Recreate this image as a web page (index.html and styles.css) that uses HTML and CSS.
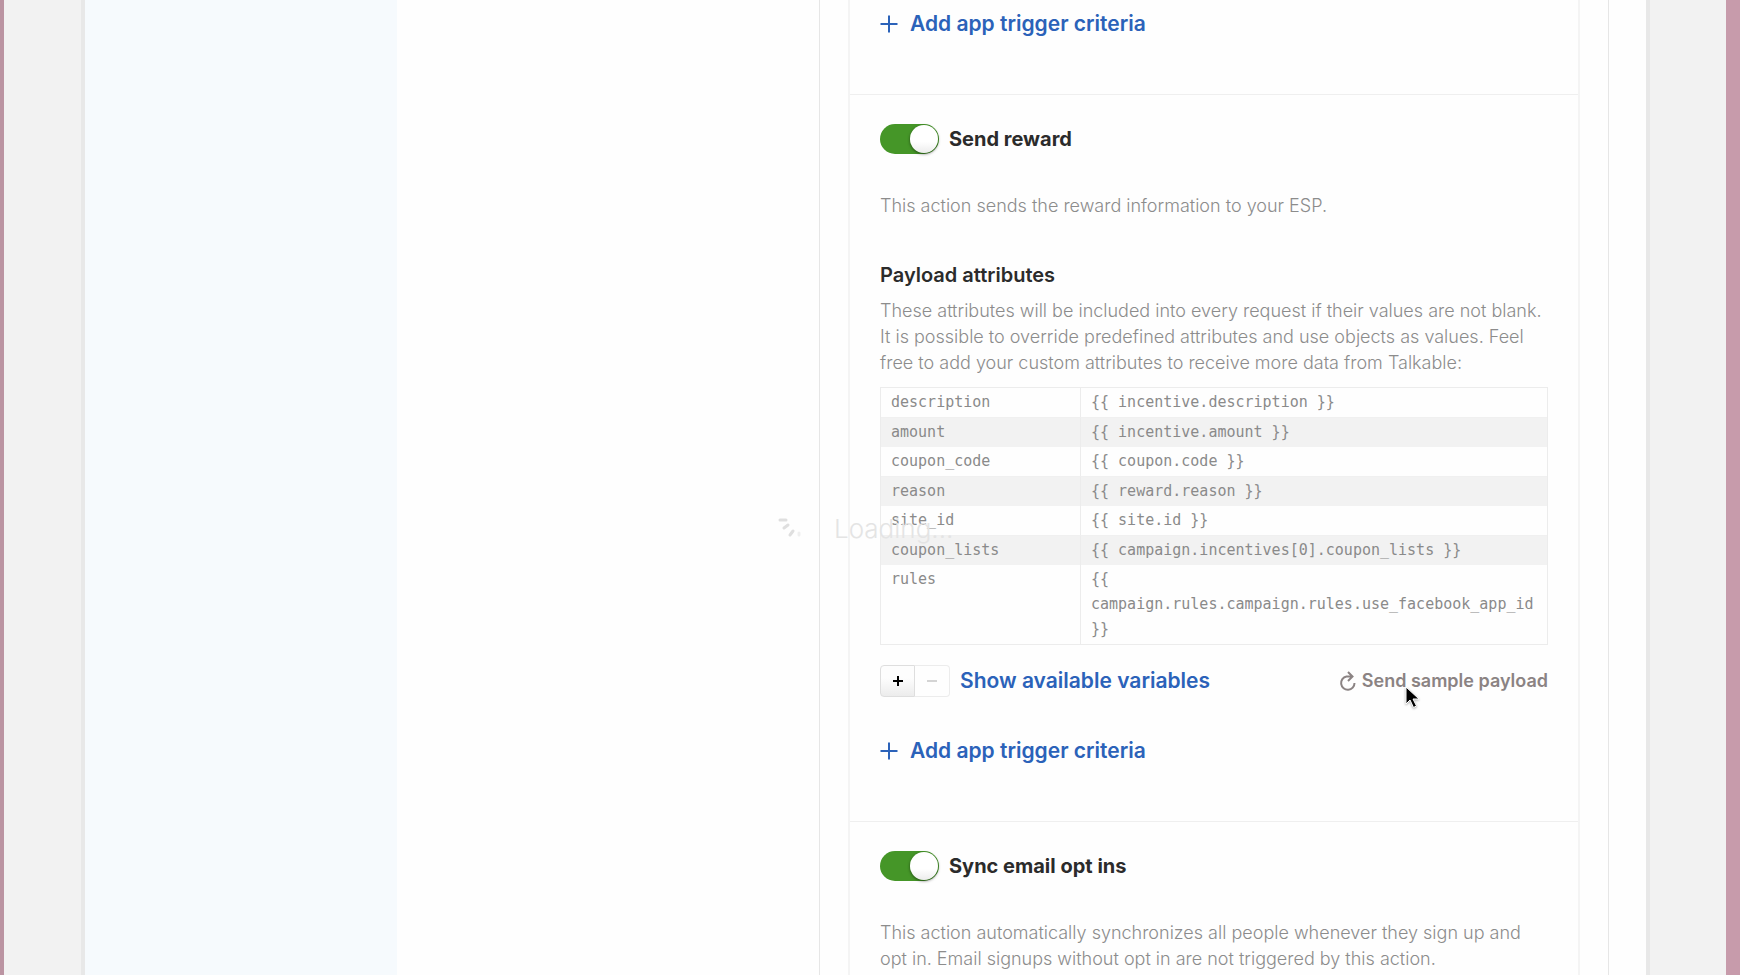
FILE: index.html
```
<!DOCTYPE html>
<html lang="en">
<head>
<meta charset="utf-8">
<title>Integration actions</title>
<link rel="stylesheet" href="styles.css">
</head>
<body>
<div class="window">
  <div class="sheet">
    <aside class="sidebar"></aside>
    <main class="main">
      <div class="panel">
        <div class="card">
          <section class="action action-first">
            <a class="add-link" href="#"><svg class="plus" viewBox="0 0 18 18" aria-hidden="true"><path d="M9 0.5v17M0.5 9h17"/></svg>Add app trigger criteria</a>
          </section>
          <section class="action">
            <label class="switch-row"><input class="switch" type="checkbox" checked>Send reward</label>
            <p class="intro">This action sends the reward information to your ESP.</p>
            <h3 class="heading">Payload attributes</h3>
            <p class="help">These attributes will be included into every request if their values are not blank. It is possible to override predefined attributes and use objects as values. Feel free to add your custom attributes to receive more data from Talkable:</p>
            <table class="payload">
              <tbody>
                <tr><td class="key">description</td><td>{{ incentive.description }}</td></tr>
                <tr><td class="key">amount</td><td>{{ incentive.amount }}</td></tr>
                <tr><td class="key">coupon_code</td><td>{{ coupon.code }}</td></tr>
                <tr><td class="key">reason</td><td>{{ reward.reason }}</td></tr>
                <tr><td class="key">site_id</td><td>{{ site.id }}</td></tr>
                <tr><td class="key">coupon_lists</td><td>{{ campaign.incentives[0].coupon_lists }}</td></tr>
                <tr><td class="key">rules</td><td>{{ campaign.rules.campaign.rules.use_facebook_app_id }}</td></tr>
              </tbody>
            </table>
            <div class="toolbar">
              <div class="stepper">
                <button class="step" type="button" aria-label="Add row"><svg viewBox="0 0 12 12" aria-hidden="true"><path d="M6 1v10M1 6h10"/></svg></button>
                <button class="step" type="button" aria-label="Remove row" disabled><svg viewBox="0 0 12 12" aria-hidden="true"><path d="M1 6h10"/></svg></button>
              </div>
              <a class="link" href="#">Show available variables</a>
              <button class="sample" type="button"><svg class="reload" viewBox="0 0 18 20" aria-hidden="true"><path d="M14 5.500H8.500a6.700 6.700 0 1 0 8 6.500M10 1l4.500 4.500L10 10"/></svg>Send sample payload
                <svg class="cursor" viewBox="0 0 16 24" aria-hidden="true"><path d="M1 1v17l4-4 3.500 7.500 3-1.500L8 13h6z"/></svg>
              </button>
            </div>
            <a class="add-link" href="#"><svg class="plus" viewBox="0 0 18 18" aria-hidden="true"><path d="M9 0.5v17M0.5 9h17"/></svg>Add app trigger criteria</a>
          </section>
          <section class="action">
            <label class="switch-row"><input class="switch" type="checkbox" checked>Sync email opt ins</label>
            <p class="intro">This action automatically synchronizes all people whenever they sign up and opt in. Email signups without opt in are not triggered by this action.</p>
          </section>
        </div>
      </div>
    </main>
  </div>
  <div class="loading" role="status">
    <svg class="spinner" viewBox="0 0 24 24" aria-hidden="true"><path d="M2 3h6M6 11l4-3M12 18l3-4"/><path class="faint" d="M21 16v2"/></svg>
    Loading...
  </div>
</div>
</body>
</html>
```
FILE: styles.css
```
* { box-sizing: border-box; }

body {
  margin: 0;
  font-family: Inter, "Open Sans", sans-serif;
  font-size: 18px;
  line-height: 26px;
  color: #2b2b2b;
}

.window {
  position: relative;
  height: 100vh;
  overflow: hidden;
  padding: 0 80px 0 81px;
  background: #f2f2f2;
  border-left: 4px solid #bb94a2;
  border-right: 14px solid #c79bab;
  display: flex;
}

.sheet {
  flex: 1;
  display: flex;
  background: #fefefe;
  box-shadow: 0 0 0 4px #e8e8e8;
}

.sidebar {
  flex: 0 0 20%;
  background: #f6fafd;
}

.main {
  flex: 1;
  display: flex;
  justify-content: flex-end;
  padding-right: 37px;
}

.panel {
  flex: 0 1 790px;
  min-width: 0;
  padding: 0 28px;
  border: 0 solid #e6e6e6;
  border-width: 0 1px;
}

.card {
  min-height: 100%;
  border: 0 solid #f4f4f4;
  border-width: 0 2px;
}

.action {
  padding: 29px 30px 57px;
  border-top: 1px solid #efefef;
}

.action-first {
  padding-top: 11px;
  border-top: 0;
}

.add-link, .link {
  color: #2b62b9;
  font-size: 21px;
  font-weight: 600;
  text-decoration: none;
}

.add-link {
  display: flex;
  align-items: center;
  gap: 12px;
}

.plus {
  width: 18px;
  height: 18px;
  fill: none;
  stroke: currentColor;
  stroke-width: 2;
}

.switch-row {
  display: flex;
  align-items: center;
  gap: 10px;
  font-size: 20px;
  font-weight: 700;
}

.switch {
  appearance: none;
  width: 59px;
  height: 30px;
  margin: 0;
  padding: 1px;
  border-radius: 15px;
  background: #459628;
  display: flex;
  justify-content: flex-end;
}

.switch::before {
  content: "";
  width: 28px;
  height: 28px;
  border-radius: 50%;
  background: linear-gradient(#fff 60%, #ececec);
  box-shadow: 0 1px 3px #0008;
}

.intro, .help {
  margin: 0;
  font-weight: 300;
  color: #8c8c8c;
}

.intro { margin-top: 39px; }

.heading {
  margin: 43px 0 10px;
  font-size: 20px;
  font-weight: 600;
}

.payload {
  width: 100%;
  margin-top: 11px;
  table-layout: fixed;
  border-collapse: separate;
  border-spacing: 0;
  border: 1px solid #ececec;
  font: 15px/25px "DejaVu Sans Mono", monospace;
  color: #8a8a8a;
}

.payload td {
  padding: 2px 5px 2px 10px;
  vertical-align: top;
}

.payload .key {
  width: 200px;
  border-right: 1px solid #ececec;
}

.payload tr:nth-child(even) td {
  border-top: 1px solid #f0f0f0;
  background: #f2f2f2;
}

.toolbar {
  display: flex;
  align-items: center;
  margin: 20px 0 41px;
}

.stepper {
  display: flex;
  margin-right: 10px;
}

.step {
  width: 35px;
  height: 32px;
  padding: 0;
  border: 1px solid #dedede;
  border-radius: 4px 0 0 4px;
  background: linear-gradient(#fdfdfd 40%, #ececec);
  color: #000;
  display: flex;
  align-items: center;
  justify-content: center;
}

.step:disabled {
  border-color: #ececec;
  border-left: 0;
  border-radius: 0 4px 4px 0;
  background: #fefefe;
  color: #d4d4d4;
}

.step svg {
  width: 12px;
  height: 12px;
  fill: none;
  stroke: currentColor;
  stroke-width: 2;
}

.sample {
  position: relative;
  margin-left: auto;
  padding: 0;
  border: 0;
  background: none;
  font: 600 18px/26px Inter, "Open Sans", sans-serif;
  color: #8b8383;
  display: flex;
  align-items: center;
  gap: 6px;
}

.reload {
  width: 18px;
  height: 20px;
  fill: none;
  stroke: currentColor;
  stroke-width: 2;
}

.cursor {
  position: absolute;
  left: 67px;
  top: 18px;
  width: 16px;
  height: 24px;
  fill: #000;
  stroke: #fff;
  stroke-width: 1;
  filter: drop-shadow(0 1px 1px #0005);
}

.loading {
  position: absolute;
  left: 774px;
  top: 513px;
  display: flex;
  align-items: center;
  gap: 32px;
  font-size: 26px;
  line-height: 32px;
  font-weight: 300;
  color: #e4e4e4;
}

.spinner {
  width: 24px;
  height: 24px;
  fill: none;
  stroke: #dfdfdf;
  stroke-width: 3;
  stroke-linecap: round;
}

.spinner .faint { stroke: #efefef; }
```
